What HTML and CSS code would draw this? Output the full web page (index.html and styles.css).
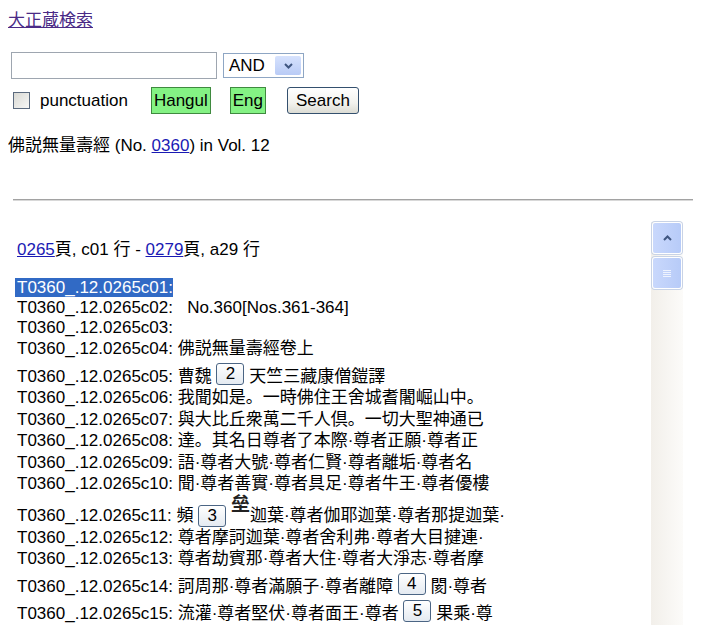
FILE: index.html
```html
<!DOCTYPE html>
<html lang="ja">
<head>
    <meta charset="UTF-8">
    <title>大正蔵検索</title>
    <link rel="stylesheet" href="styles.css">
</head>
<body>

<div class="home"><a href="#" class="visited">大正蔵検索</a></div>

<form class="search">
    <div class="row">
        <input type="text" class="query">
        <span class="select">AND
            <span class="select-btn">
                <svg width="9" height="6" viewBox="0 0 9 6"><path d="M1 1l3.5 3.5L8 1" stroke="#3f5680" stroke-width="2" fill="none"/></svg>
            </span>
        </span>
    </div>
    <div class="row">
        <span class="check"></span>
        <span class="check-label">punctuation</span>
        <button type="button" class="btn-green hangul">Hangul</button>
        <button type="button" class="btn-green eng">Eng</button>
        <button type="button" class="btn-search">Search</button>
    </div>
</form>

<p class="title">佛説無量壽經 (No. <a href="#">0360</a>) in Vol. 12</p>

<hr>

<div class="frame">
    <div class="frame-body">
        <div class="range"><a href="#">0265</a>頁, c01 行 - <a href="#">0279</a>頁, a29 行</div>

        <div class="line ascii"><span class="selected">T0360_.12.0265c01:</span></div>
        <div class="line ascii">T0360_.12.0265c02:&nbsp;&nbsp; No.360[Nos.361-364]</div>
        <div class="line ascii">T0360_.12.0265c03:</div>
        <div class="line">T0360_.12.0265c04: 佛説無量壽經卷上</div>
        <div class="line">T0360_.12.0265c05: 曹魏 <span class="note">2</span> 天竺三藏康僧鎧譯</div>
        <div class="line">T0360_.12.0265c06: 我聞如是。一時佛住王舍城耆闍崛山中。</div>
        <div class="line">T0360_.12.0265c07: 與大比丘衆萬二千人倶。一切大聖神通已</div>
        <div class="line">T0360_.12.0265c08: 達。其名日尊者了本際·尊者正願·尊者正</div>
        <div class="line">T0360_.12.0265c09: 語·尊者大號·尊者仁賢·尊者離垢·尊者名</div>
        <div class="line">T0360_.12.0265c10: 聞·尊者善實·尊者具足·尊者牛王·尊者優樓</div>
        <div class="line">T0360_.12.0265c11: 頻 <span class="note note-low">3</span> <span class="gaiji">垒</span>迦葉·尊者伽耶迦葉·尊者那提迦葉·</div>
        <div class="line">T0360_.12.0265c12: 尊者摩訶迦葉·尊者舍利弗·尊者大目揵連·</div>
        <div class="line">T0360_.12.0265c13: 尊者劫賓那·尊者大住·尊者大淨志·尊者摩</div>
        <div class="line">T0360_.12.0265c14: 訶周那·尊者滿願子·尊者離障 <span class="note">4</span> 閡·尊者</div>
        <div class="line">T0360_.12.0265c15: 流灌·尊者堅伏·尊者面王·尊者 <span class="note">5</span> 果乘·尊</div>
        <div class="line">T0360_.12.0265c16: 者仁性·尊者 <span class="note">6</span> 嘉樂·尊者善來·尊者羅云·尊者阿難</div>
    </div>
    <div class="scrollbar">
        <div class="sb-btn">
            <svg width="9" height="6" viewBox="0 0 9 6"><path d="M1 5l3.5-3.5L8 5" stroke="#3f5680" stroke-width="2" fill="none"/></svg>
        </div>
        <div class="sb-thumb">
            <svg width="8" height="9" viewBox="0 0 8 9"><path d="M0 1.5h8M0 3.5h8M0 5.5h8M0 7.5h8" stroke="#eef3fe" stroke-width="1"/></svg>
        </div>
    </div>
</div>

</body>
</html>
```

FILE: styles.css
```css
html {
    background: #fff;
    overflow: hidden;
}

body {
    margin: 8px;
    font-family: "Liberation Sans", "Noto Sans CJK JP", sans-serif;
    font-size: 17px;
    line-height: 20px;
    color: #000;
}

a {
    color: #1a1ab4;
}

a.visited {
    color: #4a2a86;
}

/* cabecera y formulario */
.home {
    height: 20px;
    padding-top: 3px;
}

.search {
    margin: 21px 0 0;
    display: flex;
    flex-direction: column;
    gap: 8px;
}

.row {
    display: flex;
    align-items: center;
}

.query {
    margin: 0 0 0 3px;
    width: 206px;
    height: 27px;
    box-sizing: border-box;
    border: 1px solid #9ea6b0;
    padding: 0;
    font: inherit;
}

.select {
    margin-left: 6px;
    width: 81px;
    height: 25px;
    box-sizing: border-box;
    border: 1px solid #8ea6c4;
    display: flex;
    align-items: center;
    padding-left: 5px;
}

.select-btn {
    margin-left: auto;
    margin-right: 2px;
    width: 26px;
    height: 19px;
    border-radius: 2px;
    background: linear-gradient(#d6e2fd, #b9cbf6);
    display: flex;
    align-items: center;
    justify-content: center;
}

.check {
    margin-left: 5px;
    width: 17px;
    height: 17px;
    box-sizing: border-box;
    border: 1px solid #5b6a7e;
    background: linear-gradient(135deg, #d9d9d4, #f7f7f5);
}

.check-label {
    margin-left: 10px;
}

.btn-green {
    height: 27px;
    box-sizing: border-box;
    margin: 0;
    padding: 0 2px;
    border: 1px solid #3f8a3f;
    border-radius: 0;
    background: #84f284;
    font: inherit;
    color: #000;
}

.hangul {
    margin-left: 23px;
}

.eng {
    margin-left: 19px;
}

.btn-search {
    margin-left: 21px;
    height: 27px;
    box-sizing: border-box;
    padding: 0 8px;
    border: 1px solid #34506e;
    border-radius: 3px;
    background: linear-gradient(#ffffff, #f2f2ee 60%, #dcdcd4);
    font: inherit;
    color: #000;
}

.title {
    margin: 22px 0 0;
}

hr {
    margin: 43px -8px 0 5px;
    height: 0;
    border: 0;
    border-top: 1px solid #a2a2a2;
    border-bottom: 1px solid #d8d8d8;
}

/* marco del texto */
.frame {
    margin-top: 21px;
    width: 675px;
    height: 420px;
    display: flex;
}

.frame-body {
    flex: 1;
    padding: 18px 0 0 9px;
    overflow: hidden;
}

.range {
    margin-bottom: 18px;
}

.line {
    white-space: nowrap;
    line-height: 21.5px;
}

.line.ascii {
    line-height: 20px;
}

.selected {
    background: #316ac5;
    color: #fff;
    padding-left: 2px;
    margin-left: -2px;
}

.note {
    display: inline-block;
    width: 28px;
    height: 22px;
    box-sizing: border-box;
    margin-top: 3px;
    border: 1px solid #4b6584;
    border-radius: 3px;
    background: linear-gradient(#ffffff, #e4eaf1);
    text-align: center;
    line-height: 20px;
    vertical-align: 3px;
}

.note-low {
    margin-top: 0;
    vertical-align: 0;
}

.gaiji {
    display: inline-block;
    font-size: 19px;
    font-weight: bold;
    line-height: 19px;
    vertical-align: 10px;
    color: #222;
}

.scrollbar {
    width: 32px;
    box-sizing: border-box;
    padding: 0 1px;
    background: linear-gradient(to right, #f2efea, #fcfbf9);
    display: flex;
    flex-direction: column;
    gap: 3px;
}

.sb-btn, .sb-thumb {
    height: 30px;
    border: 1px solid #fff;
    border-radius: 3px;
    background: linear-gradient(to right, #c9d8fc, #b7cbf8);
    box-shadow: 0 0 0 1px #c8d3e6;
    display: flex;
    align-items: center;
    justify-content: center;
}
```
